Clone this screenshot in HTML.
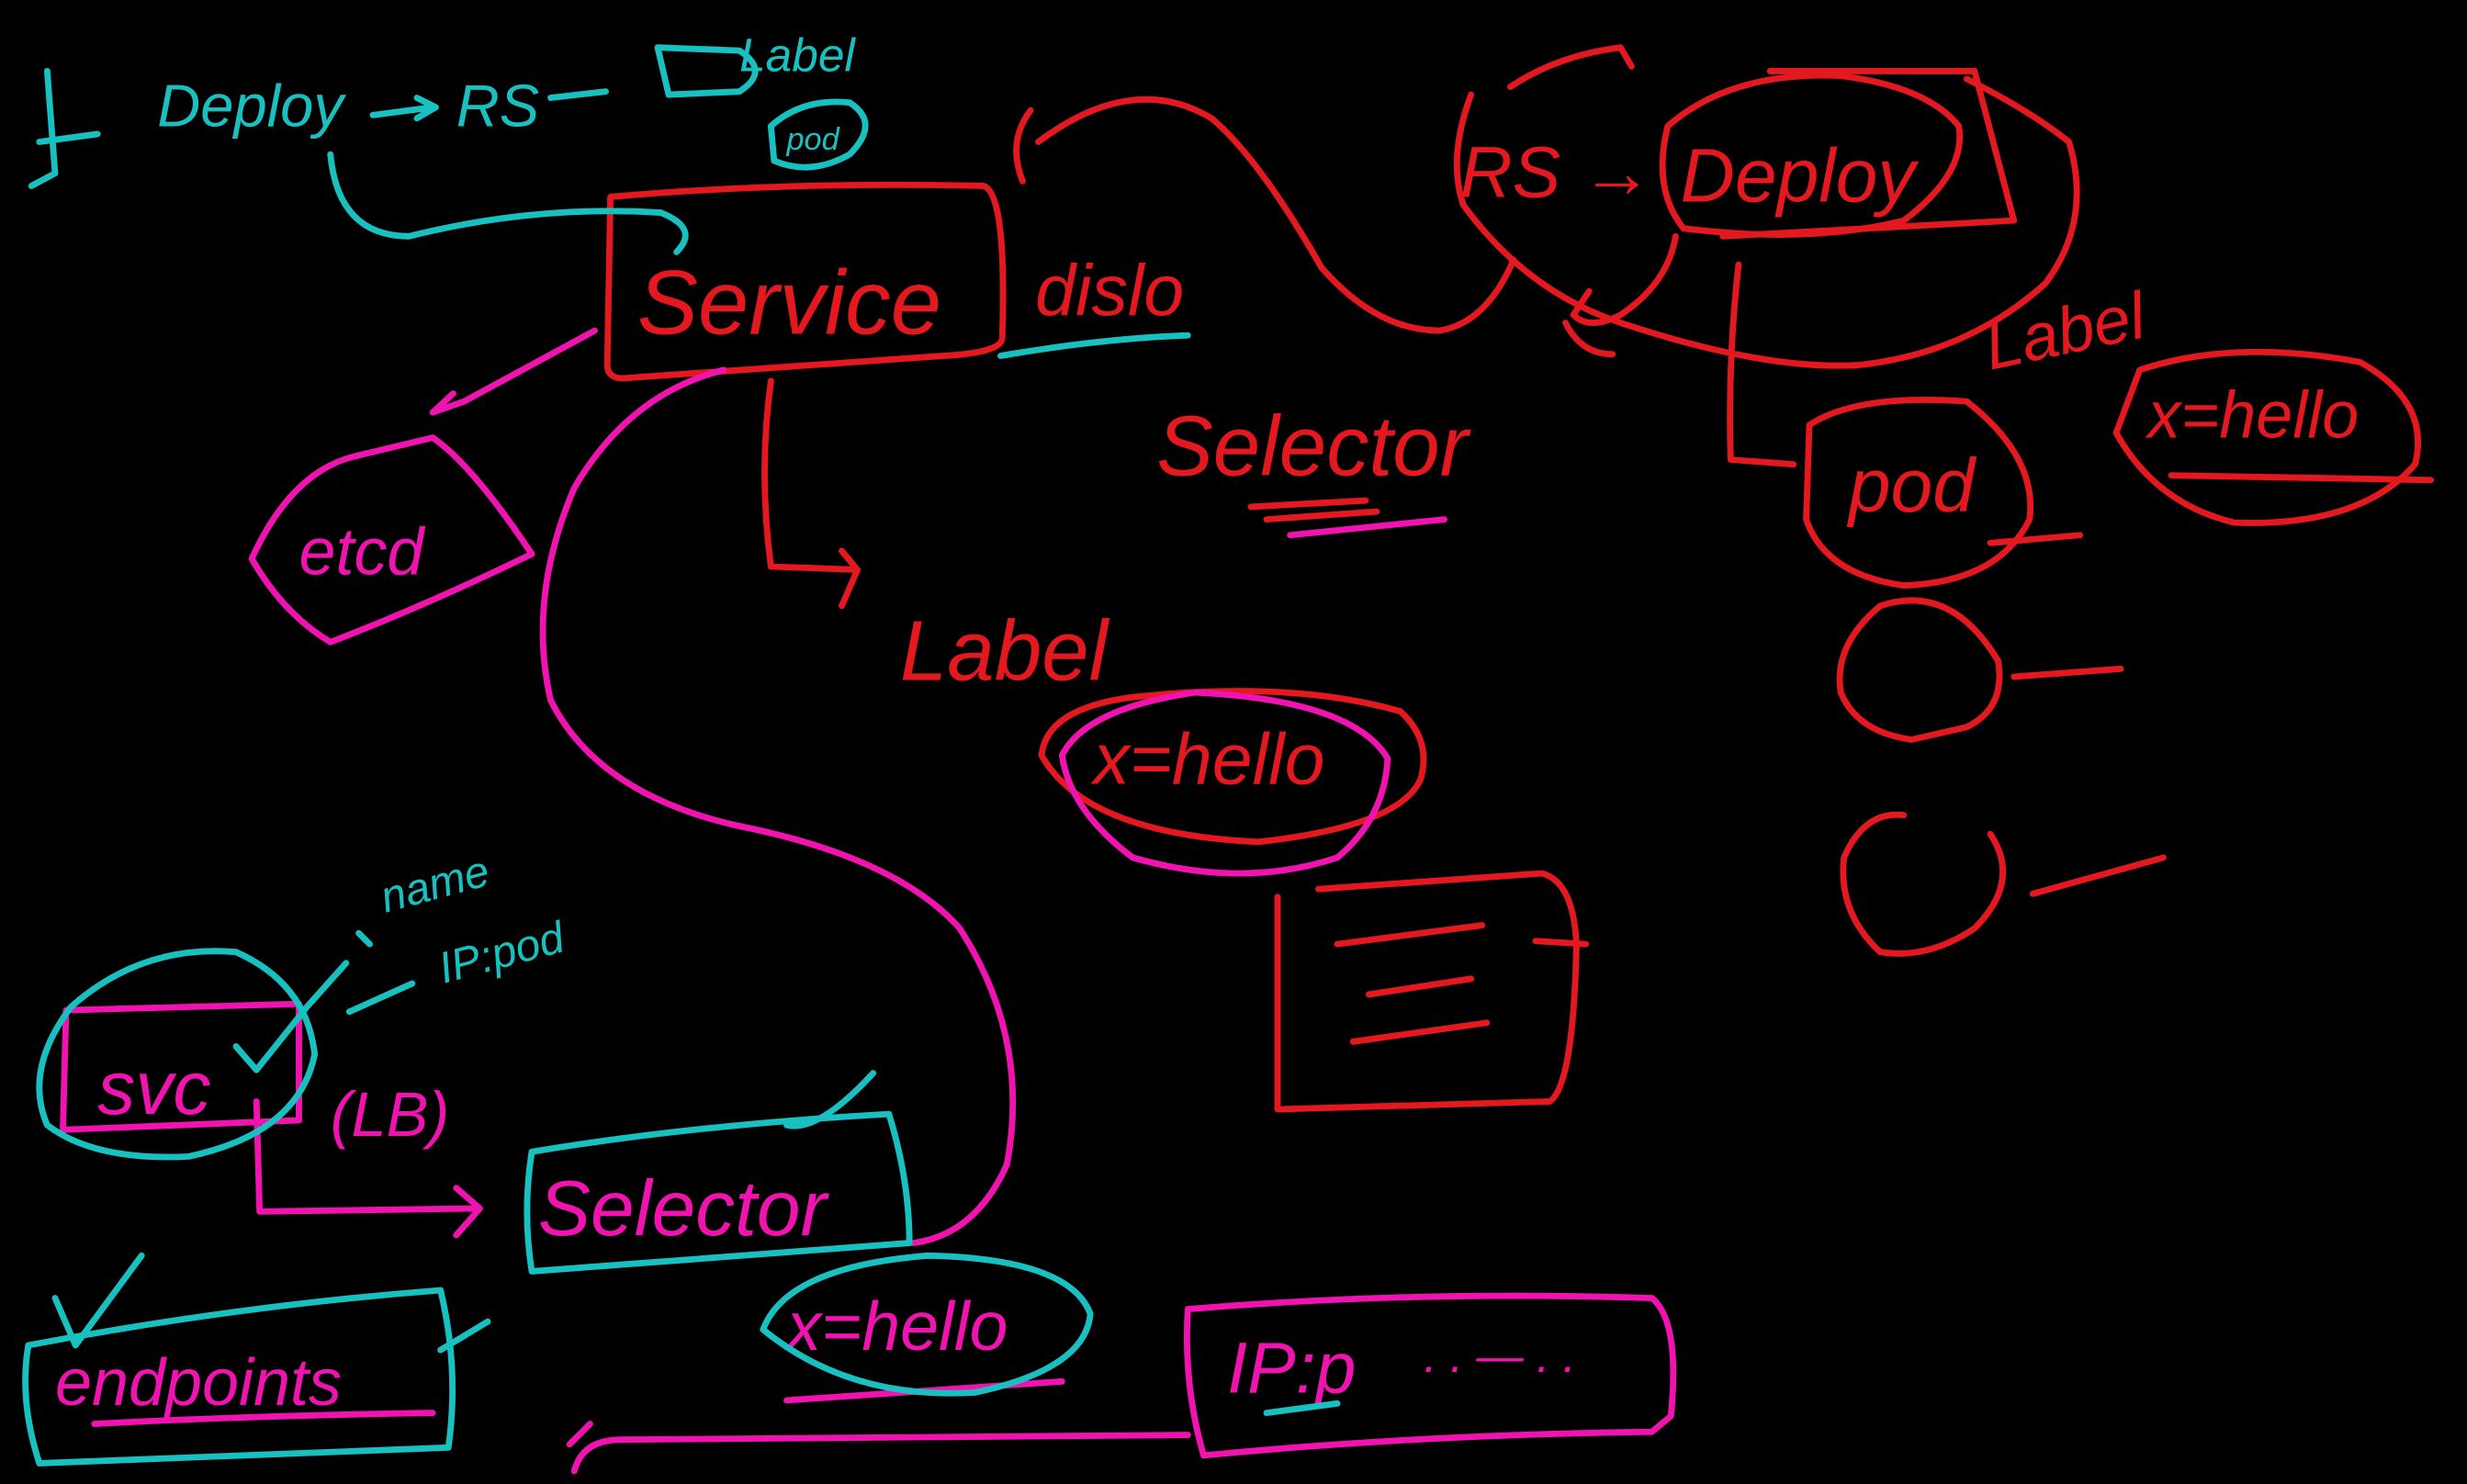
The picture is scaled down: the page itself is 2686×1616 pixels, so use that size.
<!DOCTYPE html>
<html><head><meta charset="utf-8"><style>
html,body{margin:0;padding:0;background:#000;width:2686px;height:1616px;overflow:hidden}
svg{display:block}
text{font-family:"Liberation Sans",sans-serif;font-style:italic}
</style></head><body>
<svg width="2686" height="1616" viewBox="0 0 1568 943" xmlns="http://www.w3.org/2000/svg">
<g fill="none" stroke-width="4" stroke-linecap="round" stroke-linejoin="round">
<!-- RED -->
<g stroke="#e3191f">
<path d="M388,125 Q500,115 625,118 Q640,122 637,215 Q636,224 600,226 L400,240 Q385,242 386,230 Z"/>
<path d="M655,70 Q640,90 650,115 M660,90 Q720,45 770,75 Q800,100 840,170 Q875,210 915,210 Q945,205 962,165"/>
<path d="M960,55 Q990,35 1030,30 L1037,42 M935,60 Q920,100 930,130 Q970,185 1030,205 Q1120,235 1180,232 Q1250,225 1300,180 Q1330,140 1315,90 Q1290,70 1250,50"/>
<path d="M1060,80 Q1100,45 1170,48 Q1225,55 1245,80 Q1250,110 1210,140 Q1150,155 1070,145 Q1050,120 1060,80 Z"/>
<path d="M1125,45 L1255,45 L1280,140 L1095,150"/>
<path d="M1065,150 Q1060,180 1030,200 Q1010,210 1000,200 L1010,185 M995,205 Q1005,225 1025,225"/>
<path d="M1105,168 Q1098,230 1100,292 L1140,295"/>
<path d="M1150,270 Q1180,250 1250,255 Q1295,290 1290,330 Q1270,370 1210,372 Q1160,365 1148,330 Z"/>
<path d="M1265,345 L1322,340"/>
<path d="M1195,385 Q1240,370 1270,420 Q1275,450 1250,462 L1215,470 Q1180,465 1170,440 Q1165,410 1195,385 Z"/>
<path d="M1280,430 L1348,425"/>
<path d="M1210,518 Q1185,515 1172,545 Q1168,580 1195,605 Q1225,610 1255,590 Q1285,560 1265,530"/>
<path d="M1292,568 L1375,545"/>
<path d="M1360,235 Q1420,215 1500,230 Q1545,255 1535,295 Q1500,335 1420,332 Q1370,320 1345,275 Z"/>
<path d="M1380,302 L1545,305"/>
<path d="M490,242 Q482,300 490,360 L545,362 M535,350 L545,362 L535,385"/>
<path d="M662,480 Q665,450 720,443 Q820,432 890,452 Q910,470 903,495 Q890,525 800,535 Q690,530 662,480 Z"/>
<path d="M812,570 L812,705 L985,700 Q1000,690 1002,600 Q1000,560 980,555 L838,565"/>
<path d="M850,600 L942,588 M870,632 L935,622 M860,662 L945,650 M976,598 L1008,600"/>
<path d="M795,322 L868,318 M805,330 L875,325"/>
</g>
<g fill="#e3191f" font-size="48" stroke="none">
<text x="405" y="212" font-size="58">Service</text>
<text x="658" y="200" font-size="46">dislo</text>
<text x="928" y="125" font-size="46">RS →</text>
<text x="1068" y="128" font-size="48">Deploy</text>
<text x="1265" y="235" font-size="42" transform="rotate(-12 1265 235)">Label</text>
<text x="1365" y="278" font-size="42">x=hello</text>
<text x="1175" y="325" font-size="48">pod</text>
<text x="735" y="302" font-size="54">Selector</text>
<text x="572" y="432" font-size="54">Label</text>
<text x="695" y="498" font-size="46">x=hello</text>
</g>
<!-- MAGENTA -->
<g stroke="#f013b0">
<path d="M378,210 L295,255 L275,262 L288,250"/>
<path d="M160,355 Q185,300 225,290 L275,278 Q300,295 338,352 Q270,385 210,408 Q180,390 160,355 Z"/>
<path d="M460,235 Q400,250 365,310 Q335,380 350,445 Q380,505 470,525 Q570,545 610,590 Q655,660 640,740 Q620,785 580,790"/>
<path d="M675,480 Q690,450 760,440 Q860,445 882,482 Q880,520 850,545 Q790,565 720,545 Q680,515 675,480 Z"/>
<path d="M820,340 L918,330"/>
<path d="M42,642 L190,638 L190,712 L40,718 Z"/>
<path d="M163,700 L165,770 L305,768 M290,755 L305,768 L290,785"/>
<path d="M755,832 Q900,820 1050,825 Q1068,840 1062,900 L1050,910 Q900,912 765,925 Q752,880 755,832 Z"/>
<path d="M755,912 L395,915 Q370,915 365,935 M375,905 L362,918"/>
<path d="M500,890 L675,878"/>
<path d="M60,905 Q150,900 275,898"/>
</g>
<g fill="#f013b0" stroke="none">
<text x="190" y="365" font-size="42">etcd</text>
<text x="62" y="708" font-size="48">svc</text>
<text x="210" y="722" font-size="40">(LB)</text>
<text x="342" y="785" font-size="50">Selector</text>
<text x="35" y="893" font-size="42">endpoints</text>
<text x="500" y="858" font-size="44">x=hello</text>
<text x="780" y="885" font-size="46">IP:p</text>
<text x="905" y="872" font-size="30">. . — . .</text>
</g>
<!-- CYAN -->
<g stroke="#19c0c0">
<path d="M210,98 Q215,150 260,150 Q340,130 420,135 Q445,145 430,160"/>
<path d="M237,73 L275,68 M265,62 L277,68 L265,75 M350,62 L385,58"/>
<path d="M418,30 L425,60 L470,58 Q490,45 470,32 Z"/>
<path d="M490,80 Q510,62 540,65 Q560,78 540,98 Q515,112 492,102 Z"/>
<path d="M30,45 L35,110 L20,118 M25,90 L62,85"/>
<path d="M45,640 Q90,600 150,605 Q195,625 200,670 Q190,720 120,735 Q60,738 30,715 Q15,680 45,640 Z"/>
<path d="M150,665 L163,680 L195,640 L220,612"/>
<path d="M222,643 L262,625 M228,593 L235,600"/>
<path d="M338,732 Q440,715 565,708 Q578,750 578,790 Q450,800 338,808 Q332,770 338,732 Z"/>
<path d="M500,715 Q520,720 555,682"/>
<path d="M18,855 Q150,830 280,820 Q292,870 285,920 L25,930 Q12,890 18,855 Z"/>
<path d="M35,825 L48,855 L90,798 M280,858 L310,840"/>
<path d="M485,845 Q500,805 590,798 Q680,800 693,835 Q690,870 620,885 Q540,890 485,845 Z"/>
<path d="M636,226 Q700,215 755,213 M805,898 L850,892"/>
</g>
<g fill="#19c0c0" stroke="none">
<text x="100" y="80" font-size="38">Deploy</text>
<text x="290" y="80" font-size="38">RS</text>
<text x="470" y="45" font-size="30">Label</text>
<text x="500" y="95" font-size="20">pod</text>
<text x="245" y="580" font-size="28" transform="rotate(-15 245 580)">name</text>
<text x="282" y="625" font-size="28" transform="rotate(-15 282 625)">IP:pod</text>
</g>
</g>
</svg>
</body></html>
